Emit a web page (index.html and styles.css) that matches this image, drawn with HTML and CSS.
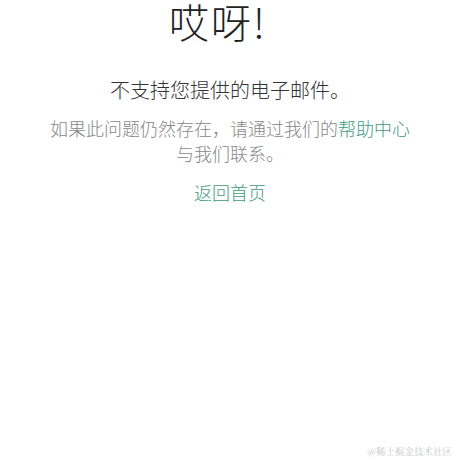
FILE: index.html
```html
<!DOCTYPE html>
<html lang="zh-CN">
<head>
<meta charset="utf-8">
<link rel="stylesheet" href="styles.css">
</head>
<body>
<main class="page">
  <h1 class="title">哎呀!</h1>
  <p class="message">不支持您提供的电子邮件。</p>
  <p class="hint">如果此问题仍然存在，请通过我们的<a class="link" href="#">帮助中心</a><br>与我们联系。</p>
  <a class="home link" href="#">返回首页</a>
</main>
<div class="watermark">@稀土掘金技术社区</div>
</body>
</html>
```
FILE: styles.css
```css
html, body {
  margin: 0;
  padding: 0;
  background: #fff;
}
body {
  width: 460px;
  height: 460px;
  position: relative;
  overflow: hidden;
  font-family: "Noto Sans CJK SC", "Noto Sans", sans-serif;
}
.page {
  display: flex;
  flex-direction: column;
  align-items: center;
  text-align: center;
  padding-top: 1px;
}
.title {
  margin: 0 0 0 -24px;
  font-size: 40px;
  line-height: 40px;
  font-weight: 300;
  letter-spacing: 2px;
  color: #222;
}
.message {
  margin: 35px 0 0;
  font-size: 20px;
  line-height: 28px;
  font-weight: 300;
  color: #333;
}
.hint {
  margin: 12px 0 0;
  font-size: 18px;
  line-height: 25px;
  font-weight: 300;
  color: #888;
}
.link {
  color: #3f9a80;
  text-decoration: none;
}
.home {
  margin-top: 14px;
  font-size: 18px;
  line-height: 25px;
  font-weight: 300;
}
.watermark {
  position: absolute;
  right: 8px;
  bottom: 3px;
  font-family: "Noto Serif CJK SC", "Noto Sans CJK SC", serif;
  font-size: 9.5px;
  line-height: 12px;
  color: #c8c8c8;
}
```
